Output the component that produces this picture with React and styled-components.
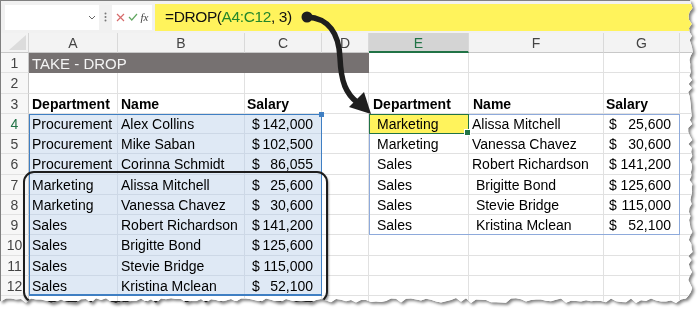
import styled, { createGlobalStyle } from 'styled-components';

const FONT = '"Liberation Sans", Arial, sans-serif';

const GlobalStyle = createGlobalStyle`
  * { box-sizing: border-box; }
  body {
    margin: 0;
    background: #fff;
    font-family: ${FONT};
  }
`;

// deterministic jagged "torn paper" outline for the screenshot frame
const seed = (() => {
  let s = 11;
  return () => {
    s = (s * 9301 + 49297) % 233280;
    return s / 233280;
  };
})();

const tornEdge = () => {
  const pts = ['0px 0px', '690px 0px'];
  for (let y = 4; y <= 298; y += 4) pts.push(`${(688 + seed() * 5).toFixed(1)}px ${y}px`);
  for (let x = 686; x >= 0; x -= 5) pts.push(`${x}px ${(298 + seed() * 5).toFixed(1)}px`);
  pts.push('0px 301px');
  return `polygon(${pts.join(', ')})`;
};

const TORN = tornEdge();

const Frame = styled.div`
  position: relative;
  width: 700px;
  height: 312px;
  filter: drop-shadow(2px 2px 1.5px rgba(0, 0, 0, 0.5));
`;

const Sheet = styled.div`
  width: 700px;
  height: 312px;
  display: flex;
  flex-direction: column;
  overflow: hidden;
  background: #fff;
  border-left: 1px solid #808080;
  border-top: 1px solid #808080;
  clip-path: ${TORN};
  font-size: 14px;
  color: #000;
`;

const FormulaBar = styled.div`
  display: flex;
  align-items: center;
  flex-shrink: 0;
  height: 32px;
  padding-left: 4px;
  background: #f1f1f1;
`;

const NameBox = styled.div`
  display: flex;
  align-items: center;
  justify-content: flex-end;
  width: 94px;
  height: 25px;
  padding-right: 3px;
  background: #fff;
`;

const Dots = styled.div`
  display: flex;
  justify-content: center;
  width: 13px;
`;

const IconBox = styled.div`
  display: flex;
  align-items: center;
  justify-content: space-around;
  width: 40px;
  height: 25px;
  margin-right: 3px;
  padding: 0 2px;
  background: #fff;
`;

const Fx = styled.span`
  font-family: "Liberation Serif", serif;
  font-style: italic;
  font-size: 11px;
  color: #444;
`;

const FormulaInput = styled.div`
  flex: 1;
  display: flex;
  align-items: center;
  height: 27px;
  padding-left: 10px;
  background: #fff35c;
  font-size: 15.5px;
  letter-spacing: -0.4px;
  color: #111;
`;

const Ref = styled.span`
  color: #23862a;
`;

const Grid = styled.div`
  display: grid;
  grid-template-columns: 28px 89px 127px 77px 47px 100px 135px 76px 40px;
  grid-template-rows: 20px repeat(14, 20.25px);
`;

const Corner = styled.div`
  grid-column: 1;
  grid-row: 1;
  position: relative;
  background: #f3f3f3;
  border-right: 1px solid #d6d6d6;
  border-bottom: 1px solid #c8c8c8;

  &::after {
    content: '';
    position: absolute;
    right: 2px;
    bottom: 2px;
    width: 17px;
    height: 15px;
    background: #dcdcdc;
    clip-path: polygon(100% 0, 100% 100%, 0 100%);
  }
`;

const ColHead = styled.div`
  grid-column: ${(p) => p.$col};
  grid-row: 1;
  display: flex;
  align-items: center;
  justify-content: center;
  padding-top: 1px;
  background: ${(p) => (p.$active ? '#d4d4d4' : '#f3f3f3')};
  color: ${(p) => (p.$active ? '#217346' : '#444')};
  border-right: 1px solid #d9d9d9;
  border-bottom: ${(p) => (p.$active ? '2px solid #217346' : '1px solid #c8c8c8')};
  font-size: 14px;
`;

const RowHead = styled.div`
  grid-column: 1;
  grid-row: ${(p) => p.$row};
  display: flex;
  align-items: center;
  justify-content: center;
  padding-top: 1px;
  background: #f7f7f7;
  color: ${(p) => (p.$active ? '#217346' : '#444')};
  border-right: 1px solid #c8c8c8;
  border-bottom: 1px solid #e2e2e2;
  font-size: 14px;
`;

const Cell = styled.div`
  grid-column: ${(p) => p.$col} / span ${(p) => p.$span || 1};
  grid-row: ${(p) => p.$row};
  display: flex;
  align-items: center;
  justify-content: ${(p) => (p.$money ? 'space-between' : 'flex-start')};
  padding: 1px ${(p) => (p.$money ? 8 : 2)}px 0 ${(p) => p.$pad}px;
  overflow: hidden;
  white-space: pre;
  background: ${(p) => p.$fill || '#fff'};
  border-right: 1px solid ${(p) => p.$line || '#e1e1e1'};
  border-bottom: 1px solid ${(p) => p.$line || '#e1e1e1'};
  color: ${(p) => p.$color || '#000'};
  font-size: ${(p) => (p.$title ? 15 : 14)}px;
  font-weight: ${(p) => (p.$bold ? 700 : 400)};
`;

const Overlay = styled.div`
  grid-column: ${(p) => p.$cols};
  grid-row: ${(p) => p.$rows};
  position: relative;
  z-index: 2;
  pointer-events: none;
`;

const SelectionBox = styled(Overlay)`
  border: 1px solid #3f7fc3;
  border-bottom-width: 2px;

  &::after {
    content: '';
    position: absolute;
    top: -3px;
    right: -3px;
    width: 5px;
    height: 5px;
    background: #3f7fc3;
  }
`;

const TableBox = styled(Overlay)`
  border: 1px solid #8eaadb;
`;

const ActiveBox = styled(Overlay)`
  border: 1px solid #217346;

  &::after {
    content: '';
    position: absolute;
    right: -3px;
    bottom: -3px;
    width: 5px;
    height: 5px;
    background: #217346;
    border: 1px solid #fff;
  }
`;

const Callout = styled(Overlay)`
  z-index: 3;
  margin: -4px -6px -7px -6px;
  border: 2px solid #1d1d1d;
  border-radius: 11px;
  box-shadow: 1px 2px 2px rgba(0, 0, 0, 0.35);
`;

const ArrowLayer = styled.svg`
  position: absolute;
  top: 0;
  left: 0;
  z-index: 5;
  pointer-events: none;
`;

const COLS = ['A', 'B', 'C', 'D', 'E', 'F', 'G', 'H'];

const LEFT = [
  ['Procurement', 'Alex Collins', '142,000'],
  ['Procurement', 'Mike Saban', '102,500'],
  ['Procurement', 'Corinna Schmidt', '86,055'],
  ['Marketing', 'Alissa Mitchell', '25,600'],
  ['Marketing', 'Vanessa Chavez', '30,600'],
  ['Sales', 'Robert Richardson', '141,200'],
  ['Sales', 'Brigitte Bond', '125,600'],
  ['Sales', 'Stevie Bridge', '115,000'],
  ['Sales', 'Kristina Mclean', '52,100'],
];

const RIGHT = [
  ['Marketing', 'Alissa Mitchell', '25,600'],
  ['Marketing', 'Vanessa Chavez', '30,600'],
  ['Sales', 'Robert Richardson', '141,200'],
  ['Sales', ' Brigitte Bond', '125,600'],
  ['Sales', ' Stevie Bridge', '115,000'],
  ['Sales', ' Kristina Mclean', '52,100'],
];

const SELECT_FILL = '#dfe9f5';
const SELECT_LINE = '#cdd8e6';

// content of one sheet cell: { text, bold, money, pad, fill, line }
const cellAt = (row, col) => {
  if (row === 3 && col <= 2) return { text: ['Department', 'Name', 'Salary'][col], bold: true, pad: col === 2 ? 2 : 3 };
  if (row === 3 && col >= 4 && col <= 6) return { text: ['Department', 'Name', 'Salary'][col - 4], bold: true, pad: col === 6 ? 2 : 4 };
  if (row >= 4 && row <= 12 && col <= 2) {
    const rec = LEFT[row - 4];
    return {
      text: rec[col],
      money: col === 2,
      pad: col === 2 ? 7 : 3,
      fill: SELECT_FILL,
      line: SELECT_LINE,
    };
  }
  if (row >= 4 && row <= 9 && col >= 4 && col <= 6) {
    const rec = RIGHT[row - 4];
    return {
      text: rec[col - 4],
      money: col === 6,
      pad: col === 4 ? 8 : col === 6 ? 5 : 3,
      fill: row === 4 && col === 4 ? '#fff35c' : undefined,
    };
  }
  return { text: '' };
};

const Chevron = () => (
  <svg width="8" height="5" viewBox="0 0 8 5">
    <polyline points="1,1 4,4 7,1" fill="none" stroke="#666" strokeWidth="1" />
  </svg>
);

const Ellipsis = () => (
  <svg width="3" height="10" viewBox="0 0 3 10">
    <circle cx="1.5" cy="1.5" r="1" fill="#777" />
    <circle cx="1.5" cy="5" r="1" fill="#777" />
    <circle cx="1.5" cy="8.5" r="1" fill="#777" />
  </svg>
);

const Cross = () => (
  <svg width="9" height="9" viewBox="0 0 9 9">
    <path d="M1 1 L8 8 M8 1 L1 8" stroke="#d66b6b" strokeWidth="1.2" />
  </svg>
);

const Check = () => (
  <svg width="10" height="8" viewBox="0 0 10 8">
    <polyline points="1,4 3.8,7 9,1" fill="none" stroke="#63a863" strokeWidth="1.2" />
  </svg>
);

const Arrow = () => (
  <ArrowLayer width="700" height="312" viewBox="0 0 700 312">
    <circle cx="307" cy="17" r="5.5" fill="#1e1e1e" />
    <path
      d="M307 17 C 329 18, 339 34, 340 58 C 341 82, 346 94, 358 103"
      fill="none"
      stroke="#1e1e1e"
      strokeWidth="5.5"
      strokeLinecap="round"
    />
    <polygon points="371,114 349,107 364,92" fill="#1e1e1e" />
  </ArrowLayer>
);

const App = () => {
  const cells = [];
  for (let row = 1; row <= 14; row += 1) {
    cells.push(
      <RowHead key={`h${row}`} $row={row + 1} $active={row === 4}>
        {row <= 12 ? row : ''}
      </RowHead>,
    );
    if (row === 1) {
      cells.push(
        <Cell key="title" $row={2} $col={2} $span={4} $pad={3} $fill="#767171" $line="#767171" $color="#f4f4f4" $title>
          TAKE - DROP
        </Cell>,
      );
    }
    COLS.forEach((_, col) => {
      if (row === 1 && col <= 3) return;
      const c = cellAt(row, col);
      cells.push(
        <Cell
          key={`${row}-${col}`}
          $row={row + 1}
          $col={col + 2}
          $pad={c.pad ?? 3}
          $bold={c.bold}
          $money={c.money}
          $fill={c.fill}
          $line={c.line}
        >
          {c.money ? (
            <>
              <span>$</span>
              <span>{c.text}</span>
            </>
          ) : (
            c.text
          )}
        </Cell>,
      );
    });
  }

  return (
    <>
      <GlobalStyle />
      <Frame>
        <Sheet>
          <FormulaBar>
            <NameBox>
              <Chevron />
            </NameBox>
            <Dots>
              <Ellipsis />
            </Dots>
            <IconBox>
              <Cross />
              <Check />
              <Fx>fx</Fx>
            </IconBox>
            <FormulaInput>
              =DROP(<Ref>A4:C12</Ref>, 3)
            </FormulaInput>
          </FormulaBar>
          <Grid>
            <Corner />
            {COLS.map((name, i) => (
              <ColHead key={name} $col={i + 2} $active={name === 'E'}>
                {name === 'H' ? '' : name}
              </ColHead>
            ))}
            {cells}
            <SelectionBox $cols="2 / 5" $rows="5 / 14" />
            <TableBox $cols="6 / 9" $rows="5 / 11" />
            <ActiveBox $cols="6 / 7" $rows="5 / 6" />
            <Callout $cols="2 / 5" $rows="8 / 14" />
          </Grid>
        </Sheet>
        <Arrow />
      </Frame>
    </>
  );
};

export default App;
